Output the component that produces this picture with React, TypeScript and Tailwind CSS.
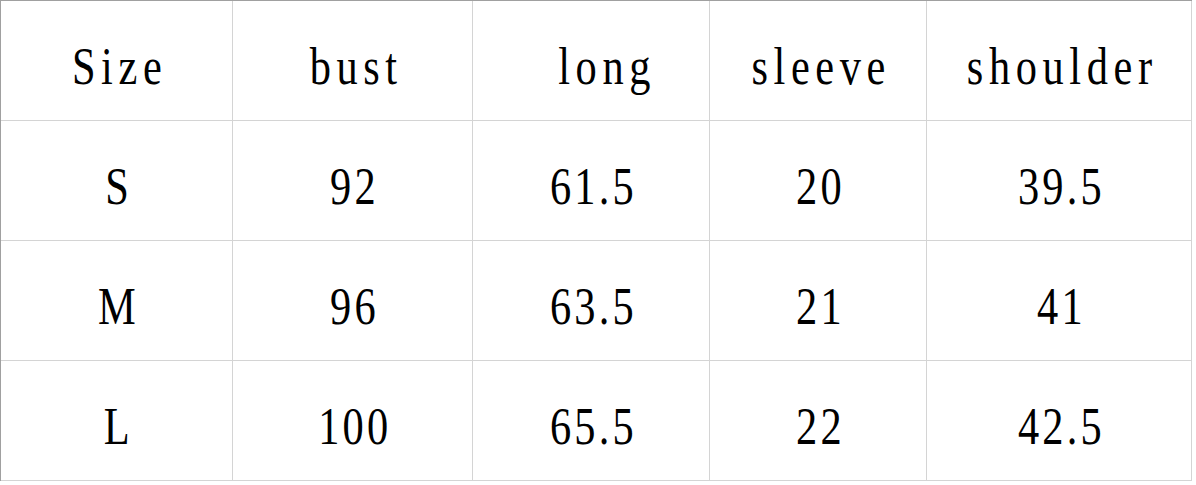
import React from 'react';

const header = ['Size', 'bust', 'long', 'sleeve', 'shoulder'];

const rows = [
  ['S', '92', '61.5', '20', '39.5'],
  ['M', '96', '63.5', '21', '41'],
  ['L', '100', '65.5', '22', '42.5'],
];

const Cell: React.FC<{ text: string; head?: boolean; shift?: boolean }> = ({ text, head, shift }) => (
  <div
    className={`h-[120px] flex items-center justify-center border-r border-b border-[#d4d4d4] pt-[11px] ${
      shift ? 'pl-[26px]' : ''
    }`}
  >
    <span
      className={`inline-block scale-x-80 text-[53px] text-black leading-none whitespace-nowrap ${
        head ? 'tracking-[7px] -mr-[7px]' : 'tracking-[4px] -mr-[4px]'
      }`}
      style={{ fontFamily: '"Liberation Serif", "Times New Roman", serif' }}
    >
      {text}
    </span>
  </div>
);

export default function App() {
  return (
    <div className="w-[1196px] h-[485px] bg-white overflow-hidden">
      <div className="w-[1192px] grid grid-cols-[232px_240px_237px_217px_265px] border-l border-t border-[#a0a0a0]">
        {header.map((h, i) => (
          <Cell key={h} text={h} head shift={i === 2} />
        ))}
        {rows.map((r) =>
          r.map((v, i) => <Cell key={r[0] + i} text={v} />)
        )}
      </div>
    </div>
  );
}
